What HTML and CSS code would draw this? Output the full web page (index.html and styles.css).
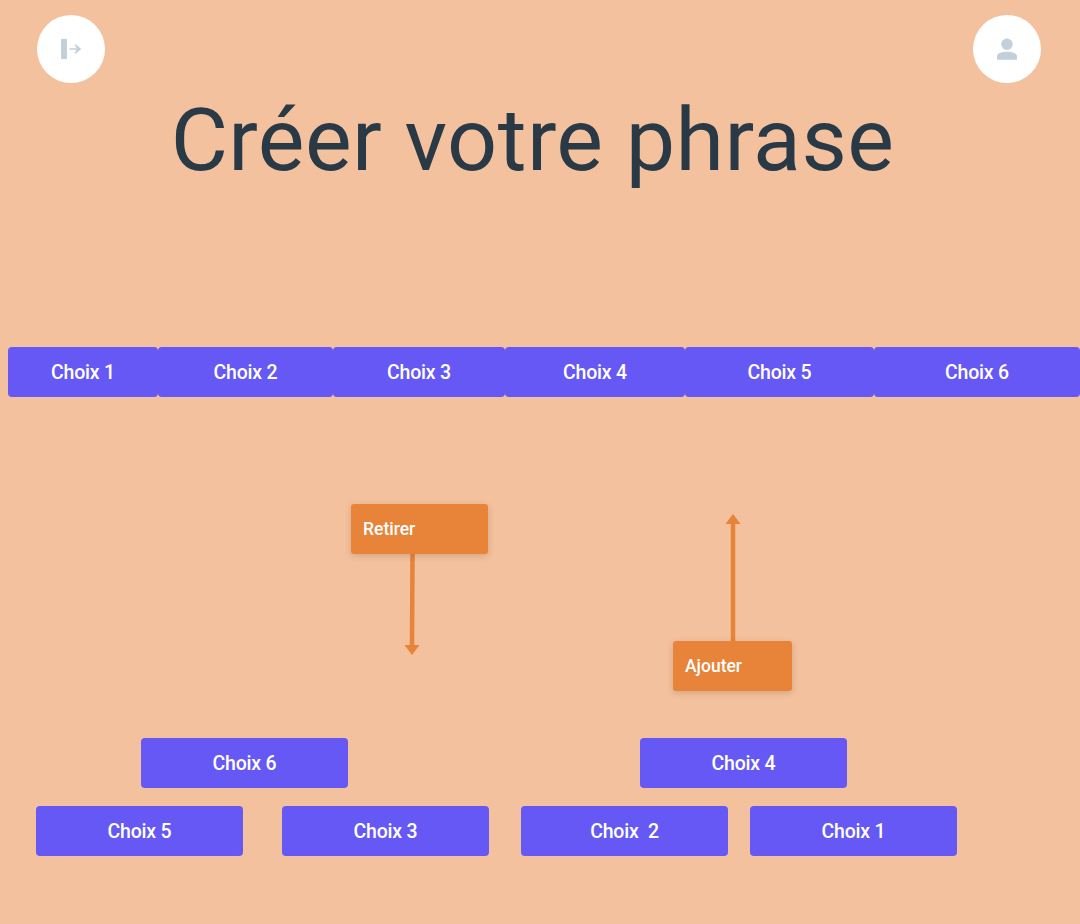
FILE: index.html
```html
<!DOCTYPE html>
<html lang="fr">
<head>
<meta charset="utf-8">
<title>Créer votre phrase</title>
<link rel="stylesheet" href="styles.css">
</head>
<body>
<header class="top">
  <button class="round" aria-label="Déconnexion">
    <svg class="icon" width="24" height="24" viewBox="0 0 24 24"><rect x="2" y="2" width="6" height="20" fill="#c3cfd9"/><path d="M10.500 11.200H17.500L15.500 7.500H17L22.200 12L17 16.500H15.500L17.500 12.800H10.500z" fill="#c3cfd9"/></svg>
  </button>
  <button class="round" aria-label="Profil">
    <svg class="icon" width="24" height="24" viewBox="0 0 24 24"><circle cx="12" cy="7.300" r="5.700" fill="#c3cfd9"/><path d="M2 22.700v-3.500c0-3 4.500-4.500 10-4.500s10 1.500 10 4.500v3.500z" fill="#c3cfd9"/></svg>
  </button>
</header>
<h1 class="title">Créer votre phrase</h1>
<div class="choices">
  <div class="choice">Choix 1</div>
  <div class="choice">Choix 2</div>
  <div class="choice">Choix 3</div>
  <div class="choice">Choix 4</div>
  <div class="choice">Choix 5</div>
  <div class="choice">Choix 6</div>
</div>
<section class="actions">
  <div class="action-remove">
    <button class="action action-w1">Retirer</button>
    <svg class="arrow-down" width="20" height="102" viewBox="0 0 20 102"><path d="M9.500 0L9 92" stroke="#e8833a" stroke-width="4.500" fill="none"/><path d="M1.500 91H16.500L9 101z" fill="#e8833a"/></svg>
  </div>
  <div class="action-add">
    <svg class="arrow-up" width="20" height="127" viewBox="0 0 20 127"><path d="M10 9V127" stroke="#e8833a" stroke-width="4.500" fill="none"/><path d="M2.500 10H17.500L10 0z" fill="#e8833a"/></svg>
    <button class="action action-w2">Ajouter</button>
  </div>
</section>
<section class="pool">
  <div class="pool-row">
    <div class="chip chip-6">Choix 6</div>
    <div class="chip chip-4">Choix 4</div>
  </div>
  <div class="pool-row row-two">
    <div class="chip">Choix 5</div>
    <div class="chip gap-a">Choix 3</div>
    <div class="chip gap-b">Choix &nbsp;2</div>
    <div class="chip gap-c">Choix 1</div>
  </div>
</section>
</body>
</html>
```
FILE: styles.css
```css
* { box-sizing: border-box; }
html, body { margin: 0; padding: 0; }
body {
  width: 1080px;
  height: 924px;
  overflow: hidden;
  background: #f3c19d;
  font-family: "Roboto", "Liberation Sans", sans-serif;
  color: #fff;
}
button { font: inherit; color: inherit; border: 0; padding: 0; }
.top {
  display: flex;
  justify-content: space-between;
  padding: 15px 39px 0 37px;
}
.round {
  width: 68px;
  height: 68px;
  border-radius: 50%;
  background: #fff;
  display: flex;
  align-items: center;
  justify-content: center;
}
.title {
  margin: 0;
  height: 264px;
  padding-top: 3px;
  padding-right: 15px;
  text-align: center;
  font-size: 88px;
  line-height: 108px;
  font-weight: 400;
  letter-spacing: 0.450px;
  color: #293a46;
}
.choices {
  display: grid;
  grid-template-columns: 150px 175px 172px 180px 189px 206px;
  margin-left: 8px;
}
.choice, .chip {
  height: 50px;
  display: flex;
  align-items: center;
  justify-content: center;
  background: #6558f5;
  border-radius: 4px;
  font-size: 19.500px;
  font-weight: 500;
  letter-spacing: -0.200px;
}
.actions {
  display: flex;
  align-items: flex-start;
  height: 234px;
  margin-top: 107px;
  padding-left: 351px;
}
.action-remove { display: flex; flex-direction: column; width: 137px; }
.action-add { display: flex; flex-direction: column; width: 119px; margin-left: 185px; margin-top: 10px; }
.action {
  height: 50px;
  background: #e8833a;
  border-radius: 3px;
  padding-left: 12px;
  text-align: left;
  font-size: 17.500px;
  font-weight: 500;
  box-shadow: 0 2px 6px rgba(90, 50, 20, 0.2);
  position: relative;
}
.action-w1 { width: 137px; }
.action-w2 { width: 119px; }
.arrow-down { margin-left: 52px; display: block; }
.arrow-up { margin-left: 50px; display: block; }
.pool { display: flex; flex-direction: column; gap: 18px; }
.pool-row { display: flex; }
.row-two { padding-left: 36px; }
.chip { width: 207px; }
.chip-6 { margin-left: 141px; }
.chip-4 { margin-left: 292px; }
.gap-a { margin-left: 39px; }
.gap-b { margin-left: 32px; }
.gap-c { margin-left: 22px; }
```
